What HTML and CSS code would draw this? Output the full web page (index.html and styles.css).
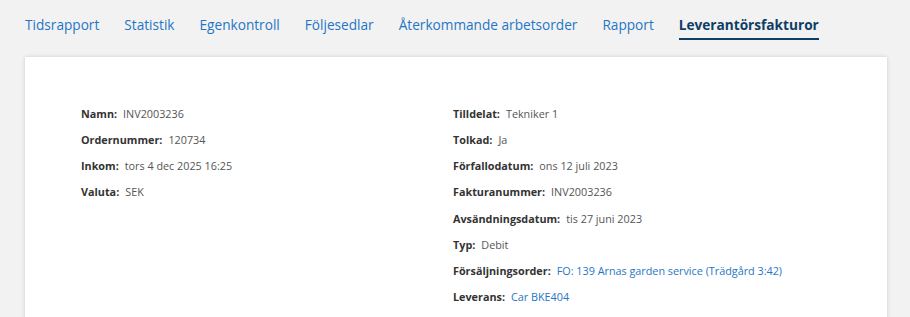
FILE: index.html
```html
<!DOCTYPE html>
<html lang="sv">
<head>
    <meta charset="UTF-8">
    <meta name="viewport" content="width=device-width, initial-scale=1.0">
    <title>Leverantörsfakturor</title>
    <link rel="stylesheet" href="styles.css">
</head>
<body>
    <nav class="tabs">
        <a class="tab">Tidsrapport</a>
        <a class="tab">Statistik</a>
        <a class="tab">Egenkontroll</a>
        <a class="tab">Följesedlar</a>
        <a class="tab">Återkommande arbetsorder</a>
        <a class="tab">Rapport</a>
        <a class="tab active">Leverantörsfakturor</a>
    </nav>
    <main class="card">
        <div class="column">
            <div class="field"><span class="label">Namn:</span><span class="value">INV2003236</span></div>
            <div class="field"><span class="label">Ordernummer:</span><span class="value">120734</span></div>
            <div class="field"><span class="label">Inkom:</span><span class="value">tors 4 dec 2025 16:25</span></div>
            <div class="field"><span class="label">Valuta:</span><span class="value">SEK</span></div>
        </div>
        <div class="column">
            <div class="field"><span class="label">Tilldelat:</span><span class="value">Tekniker 1</span></div>
            <div class="field"><span class="label">Tolkad:</span><span class="value">Ja</span></div>
            <div class="field"><span class="label">Förfallodatum:</span><span class="value">ons 12 juli 2023</span></div>
            <div class="field"><span class="label">Fakturanummer:</span><span class="value">INV2003236</span></div>
            <div class="field"><span class="label">Avsändningsdatum:</span><span class="value">tis 27 juni 2023</span></div>
            <div class="field"><span class="label">Typ:</span><span class="value">Debit</span></div>
            <div class="field"><span class="label">Försäljningsorder:</span><a class="value link">FO: 139 Arnas garden service (Trädgård 3:42)</a></div>
            <div class="field"><span class="label">Leverans:</span><a class="value link">Car BKE404</a></div>
        </div>
    </main>
</body>
</html>
```
FILE: styles.css
```css
* {
    box-sizing: border-box;
}
body {
    margin: 0;
    background-color: #f2f2f2;
    font-family: "Open Sans", "Noto Sans", sans-serif;
    color: #333;
}

.tabs {
    display: flex;
    gap: 25px;
    padding: 15px 25px 0;
    height: 57px;
}
.tab {
    font-size: 13.65px;
    line-height: 20px;
    color: #1f76c5;
    height: 25px;
    border-bottom: 2px solid transparent;
}
.tab.active {
    color: #0e3d66;
    font-weight: 700;
    border-bottom-color: #0e3d66;
}

.card {
    margin: 0 23px 0 25px;
    background-color: #fff;
    box-shadow: 0 0 4px rgba(0, 0, 0, 0.15);
    padding: 49px 56px 10px;
    display: grid;
    grid-template-columns: 372px 1fr;
}

.field {
    font-size: 10.8px;
    line-height: 16px;
    margin-bottom: 10.15px;
    white-space: nowrap;
}
.label {
    font-weight: 700;
    color: #333;
    margin-right: 6px;
}
.value {
    color: #555;
}
.link {
    color: #1f76c5;
}
```
